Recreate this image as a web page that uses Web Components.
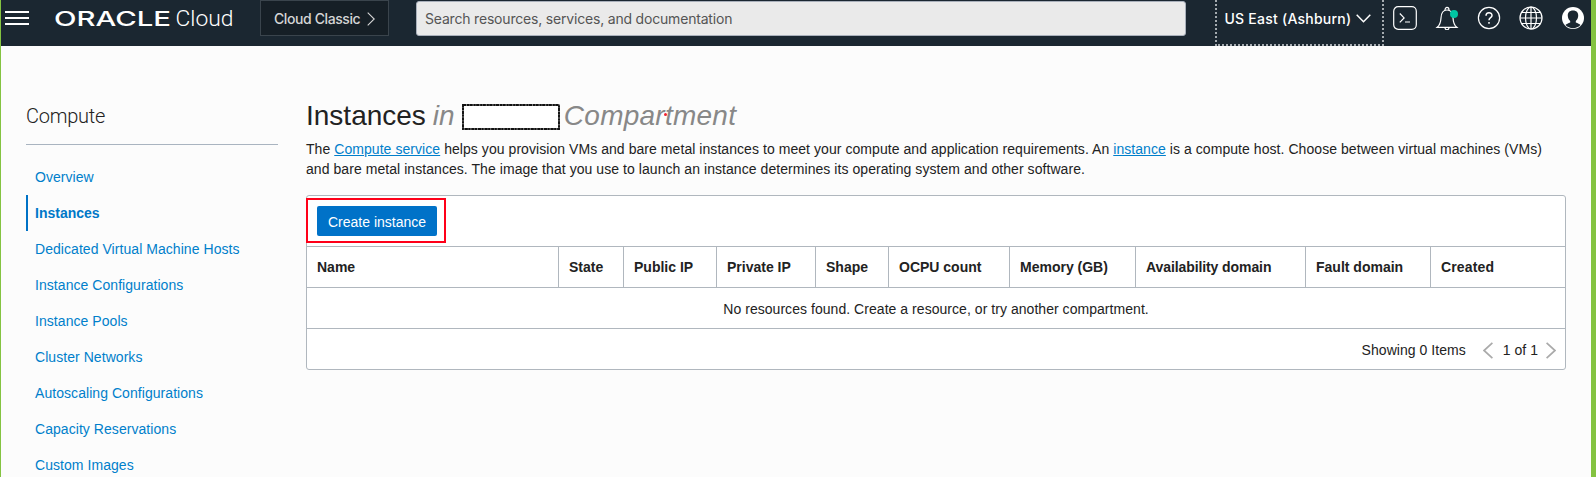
<!DOCTYPE html>
<html lang="en">
<head>
<meta charset="utf-8">
<title>Compute Instances</title>
<style>
html,body{margin:0;height:100%;overflow:hidden}
body{font:14px/20px "Liberation Sans",Arial,sans-serif;color:#222}
</style>
</head>
<body>
<console-app></console-app>
<script>
const define = (name, html) => customElements.define(name, class extends HTMLElement {
  constructor() {
    super();
    const t = document.createElement('template');
    t.innerHTML = html;
    this.attachShadow({mode: 'open'}).append(t.content.cloneNode(true));
  }
});

define('brand-logo', `<style>
:host{display:flex;width:178px;height:46px;color:#fff}
svg{display:block}
.o{font:500 20px Inter,sans-serif}
.c{font:300 22.5px Roboto,sans-serif}
</style><svg width="178" height="46" fill="#fff"><text class="o" x="-1" y="26" textLength="117" lengthAdjust="spacingAndGlyphs">ORACLE</text><text class="c" x="120.500" y="26" textLength="58" lengthAdjust="spacingAndGlyphs">Cloud</text></svg>`);

define('classic-link', `<style>
:host{box-sizing:border-box;display:flex;align-items:center;gap:6px;width:129px;height:36px;padding:2px 0 0 13px;border:1px solid #3a444c;background:#161f26;color:#d5d5d5;font:500 14px/20px Inter,sans-serif;letter-spacing:-.4px}
span{white-space:nowrap;width:87px}
</style><span><slot></slot></span><svg width="8" height="14" fill="none" stroke="#d5d5d5" stroke-width="1.1"><path d="M.7.7 7.2 7 .7 13.3"/></svg>`);

define('search-box', `<style>
:host{box-sizing:border-box;display:block;width:770px;height:35px;margin-top:1px;padding:7px 8px;background:#eaeaea;border:1px solid #a9b0bb;border-radius:3px;color:#555;font:14px/20px Inter,sans-serif;letter-spacing:-.19px}
</style><slot></slot>`);

define('region-picker', `<style>
:host{box-sizing:border-box;display:flex;gap:5px;width:169px;height:46px;padding:9px 0 0 7.500px;border:2px dotted #a5abb0;border-top:0;color:#fff;font:500 14px/20px Inter,sans-serif;letter-spacing:.24px}
span{width:126px;white-space:nowrap}
svg{margin-top:5px}
</style><span><slot></slot></span><svg width="15" height="9" fill="none" stroke="#fff" stroke-width="1.500"><path d="M.7.8 7.500 7.700 14.300.8"/></svg>`);

define('header-icons', `<style>
:host{display:flex;gap:18px;padding-top:6px}
svg{display:block;width:24px;height:24px;fill:none;stroke:#fff;stroke-width:1.2}
</style>
<svg viewBox="0 0 24 24"><rect x=".7" y=".7" width="22.6" height="22.6" rx="4.5"/><path d="M6.800 7.500l4.300 4.400L6.800 16.300M12 16h5"/></svg>
<svg viewBox="0 0 24 24"><path d="M2.200 21.300h19.600C18.800 19 18.300 17 18 12c-.2-5-2.200-8-6-8s-5.800 3-6 8c-.3 5-.8 7-3.800 9.300zM10 4c0-3.500 4-3.500 4 0M10 21.500c0 3 4 3 4 0"/><circle cx="19" cy="8" r="4" fill="#00c5a2" stroke="none"/></svg>
<svg viewBox="0 0 24 24"><circle cx="12" cy="12" r="10.600"/><path stroke-width="1.500" d="M9 9.800C9 5.700 15 5.900 15 9.400c0 2.300-3 2.300-3 4.800M12 16v1.700"/></svg>
<svg viewBox="0 0 24 24"><circle cx="12" cy="12" r="11"/><ellipse cx="12" cy="12" rx="5.500" ry="11"/><path d="M12 1v22M1 12h22M3 6.500h18M3 17.500h18"/></svg>
<svg viewBox="0 0 24 24"><circle cx="12" cy="12" r="11" fill="#fff" stroke="none"/><path fill="#1b2731" stroke="none" d="M12 4.500c3.500 0 5.500 2.200 5.200 5.500-.2 2.300-1.100 3.900-2.400 5v1.500c2 .8 3.700 1.400 4.700 2.600C15.500 23.300 8.500 23.300 4.500 19.100c1-1.200 2.700-1.800 4.700-2.600V15c-1.300-1.100-2.200-2.700-2.400-5C6.500 6.700 8.500 4.500 12 4.500z"/></svg>`);

define('top-bar', `<style>
:host{display:flex;align-items:flex-start;height:46px;background:#1b2731}
.menu{display:block;margin:11px 26px 0 4px}
classic-link{margin-left:27px}search-box{margin-left:27px}region-picker{margin-left:29px}header-icons{margin-left:9px}
</style>
<svg class="menu" width="24" height="14" fill="#fff"><path d="M0 0h24v2H0zM0 6h24v2H0zM0 12h24v2H0z"/></svg>
<brand-logo></brand-logo><classic-link>Cloud Classic</classic-link>
<search-box>Search resources, services, and documentation</search-box>
<region-picker>US East (Ashburn)</region-picker><header-icons></header-icons>`);

define('nav-item', `<style>
:host{box-sizing:border-box;display:block;height:36px;padding:8px 0 8px 9px;color:#007fcb;white-space:nowrap;letter-spacing:.055px}
:host([active]){border-left:2px solid #0072c6;padding-left:7px;font-weight:bold;color:#0078c8;letter-spacing:0}
</style><slot></slot>`);

define('side-nav', `<style>
:host{display:block;width:252px;padding:57px 0 0 25px}
h2{margin:0 0 14px;height:41px;border-bottom:1px solid #a9b4c0;font:300 20px/27px Roboto,sans-serif;letter-spacing:-.25px;color:#222}
</style><h2>Compute</h2>
<nav><nav-item>Overview</nav-item><nav-item active>Instances</nav-item><nav-item>Dedicated Virtual Machine Hosts</nav-item><nav-item>Instance Configurations</nav-item><nav-item>Instance Pools</nav-item><nav-item>Cluster Networks</nav-item><nav-item>Autoscaling Configurations</nav-item><nav-item>Capacity Reservations</nav-item><nav-item>Custom Images</nav-item></nav>`);

define('page-title', `<style>
:host{display:block}
h1{display:flex;align-items:flex-start;margin:0;font:28px/36px "Liberation Sans",sans-serif;color:#222}
i{color:#888}.in{width:22px;margin-left:7px}
.box{margin:6px 4px 0 7px;display:block}
.c{position:relative;letter-spacing:.25px}
.dot{position:absolute;left:100px;top:15px;width:3px;height:3px;border-radius:50%;background:#f02030}
</style><h1><span>Instances</span><i class="in">in</i><svg class="box" width="98" height="26"><rect x="1" y="1" width="96" height="24" fill="#fff" stroke="#333" stroke-width="1.300"/><rect x="1" y="1" width="96" height="24" fill="none" stroke="#111" stroke-width="1.900" stroke-dasharray="3 1 2 .6"/></svg><i class="c">Compartment<span class="dot"></span></i></h1>`);

define('page-intro', `<style>
:host{display:block;white-space:nowrap;letter-spacing:.059px}
p{margin:0}a{color:#007fcb;text-decoration:underline}
</style><p>The <a>Compute service</a> helps you provision VMs and bare metal instances to meet your compute and application requirements. An <a>instance</a> is a compute host. Choose between virtual machines (VMs)</p><p>and bare metal instances. The image that you use to launch an instance determines its operating system and other software.</p>`);

define('action-button', `<style>
:host{display:block;box-sizing:border-box;width:120px;height:30px;padding:6px 0 0;border-radius:2px;background:#0072c8;color:#fff;text-align:center;white-space:nowrap}
</style><slot></slot>`);

define('instance-table', `<style>
:host{display:block;box-sizing:border-box;width:1260px;height:175px;border:1px solid #b0b7be;border-radius:3px;background:#fff}
.tools{position:relative;height:40px;padding:10px 0 0 10px;border-bottom:1px solid #b0b7be}
.mark{position:absolute;left:-1px;top:2px;width:136px;height:41px;border:2px solid #ff0019}
.head{display:grid;grid-template-columns:252px 65px 93px 99px 73px 121px 126px 170px 125px 1fr;height:40px;border-bottom:1px solid #b0b7be;font-weight:bold}
.head div{padding:10px 0 0 10px;white-space:nowrap;border-right:1px solid #b0b7be}
.head div:nth-child(8){letter-spacing:-.09px}
.head div:nth-child(10){letter-spacing:.15px}
.head div:last-child{border:0}
.none{height:40px;line-height:42px;text-align:center;border-bottom:1px solid #b0b7be;letter-spacing:.045px}
.foot{display:flex;height:40px;align-items:center;justify-content:flex-end;padding-right:9px}
.foot span{padding-top:2px;letter-spacing:.04px}
.pg{margin:0 8px 0 10px}
.foot svg:first-of-type{margin-left:17px}
svg{display:block;margin-top:2px;fill:none;stroke:#aaa;stroke-width:1.700}
</style>
<div class="tools"><action-button>Create instance</action-button><div class="mark"></div></div>
<div class="head"><div>Name</div><div>State</div><div>Public IP</div><div>Private IP</div><div>Shape</div><div>OCPU count</div><div>Memory (GB)</div><div>Availability domain</div><div>Fault domain</div><div>Created</div></div>
<div class="none">No resources found. Create a resource, or try another compartment.</div>
<div class="foot"><span>Showing 0 Items</span><svg width="10" height="17"><path d="M9.400.8 1 8.500 9.400 16.200"/></svg><span class="pg">1 of 1</span><svg width="10" height="17"><path d="M.6.8 9 8.500.6 16.200"/></svg></div>`);

define('console-app', `<style>
:host{box-sizing:border-box;display:block;height:100vh;border-left:1px solid #84c341;border-right:5px solid #84c341;background:#fcfcfc;overflow:hidden}
.body{display:flex}
main{margin-left:28px;padding-top:52px}
page-intro{margin:5px 0 16px}
</style><top-bar></top-bar><div class="body"><side-nav></side-nav><main><page-title></page-title><page-intro></page-intro><instance-table></instance-table></main></div>`);
</script>
</body>
</html>
